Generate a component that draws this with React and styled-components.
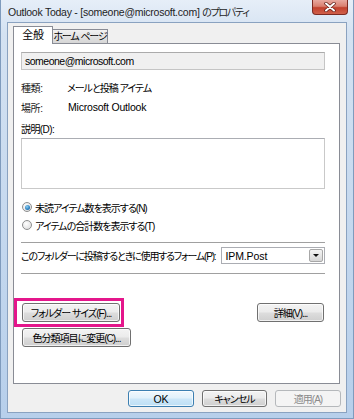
import React from "react";
import styled, { createGlobalStyle } from "styled-components";

const GlobalStyle = createGlobalStyle`
  html, body {
    margin: 0;
    padding: 0;
    background: #ffffff;
  }
  body {
    font-family: "Liberation Sans", "Noto Sans CJK JP", sans-serif;
    font-feature-settings: "palt";
    font-size: 10px;
    letter-spacing: -1px;
    color: #000;
  }
`;

// Latin runs are set a little larger and looser than the kana
const Lat = styled.span`
  font-size: 10.5px;
  letter-spacing: ${(p) => (p.$ls !== undefined ? p.$ls : -0.3)}px;
`;

const Window = styled.div`
  width: 354px;
  height: 419px;
  box-sizing: border-box;
  display: flex;
  flex-direction: column;
  padding: 0 6px 5px 6px;
  background: linear-gradient(180deg, #e6eef8 0%, #d4e2f2 8%, #c3d7ee 60%, #b7cfeb 100%);
  border: 1px solid #7f9bbd;
  border-top: none;
`;

const TitleBar = styled.div`
  height: 22px;
  display: flex;
  align-items: flex-start;
  justify-content: space-between;
  margin-left: -5px;
  margin-right: -1px;
`;

const Title = styled.div`
  line-height: 24px;
  padding-left: 6px;
  color: #1e1e1e;
  white-space: nowrap;
  letter-spacing: -1.3px;
`;

const CloseButton = styled.div`
  width: 36px;
  height: 15px;
  box-sizing: border-box;
  border: 1px solid #7c2a22;
  border-top: none;
  border-radius: 0 0 4px 4px;
  background: linear-gradient(180deg, #e8a99f 0%, #d98070 45%, #c2412e 55%, #d0604a 100%);
  display: flex;
  align-items: center;
  justify-content: center;
`;

const Client = styled.div`
  flex: 1;
  box-sizing: border-box;
  background: #f0f0f0;
  border: 1px solid #8aa2c0;
  padding: 4px 6px 0 5px;
  display: flex;
  flex-direction: column;
`;

const TabRow = styled.div`
  display: flex;
  align-items: flex-end;
  height: 17px;
  margin-bottom: -1px;
  position: relative;
  z-index: 1;
`;

const Tab = styled.div`
  box-sizing: border-box;
  height: ${(p) => (p.$active ? "18px" : "15px")};
  width: ${(p) => (p.$active ? "40px" : "55px")};
  text-align: center;
  border: 1px solid #898c95;
  border-bottom: ${(p) => (p.$active ? "none" : "1px solid #898c95")};
  border-left: ${(p) => (p.$active ? "1px solid #898c95" : "none")};
  background: ${(p) => (p.$active ? "#ffffff" : "linear-gradient(180deg, #f2f2f2 0%, #e3e3e3 50%, #d6d6d6 100%)")};
  line-height: ${(p) => (p.$active ? "17px" : "14px")};
  font-size: ${(p) => (p.$active ? "11px" : "10px")};
  letter-spacing: ${(p) => (p.$active ? "-0.2px" : "-1.1px")};
  white-space: nowrap;
`;

const Panel = styled.div`
  box-sizing: border-box;
  height: 341px;
  background: #ffffff;
  border: 1px solid #898c95;
  padding: 8px 14px 0 7px;
  display: flex;
  flex-direction: column;
`;

const ReadOnlyField = styled.div`
  height: 18px;
  box-sizing: border-box;
  background: #f0f0f0;
  border: 1px solid #c5c5c5;
  border-top-color: #ababab;
  padding-left: 3px;
  line-height: 16px;
  font-size: 10.5px;
  letter-spacing: -0.5px;
`;

const InfoRow = styled.div`
  height: 20px;
  display: flex;
  align-items: center;
  margin-top: ${(p) => p.$mt || 0}px;
  white-space: nowrap;
`;

const InfoLabel = styled.div`
  width: ${(p) => p.$w || 46}px;
  color: #1a1a1a;
  letter-spacing: -0.4px;
`;

const Label = styled.div`
  height: 14px;
  line-height: 14px;
  letter-spacing: -0.6px;
  margin-top: ${(p) => p.$mt || 0}px;
`;

const TextArea = styled.div`
  height: 51px;
  box-sizing: border-box;
  margin-top: 1px;
  border: 1px solid #c9c9c9;
  border-top-color: #abadb3;
  background: #fff;
`;

const RadioRow = styled.div`
  height: 16px;
  display: flex;
  align-items: center;
  margin-top: ${(p) => p.$mt || 0}px;
  padding-left: 1px;
  white-space: nowrap;
`;

const RadioCircle = styled.span`
  width: 10px;
  height: 10px;
  box-sizing: border-box;
  border-radius: 50%;
  border: 1px solid #8e8f8f;
  background: radial-gradient(circle at 40% 35%, #ffffff 0%, #e4e4e4 70%, #d0d0d0 100%);
  display: flex;
  align-items: center;
  justify-content: center;
  margin-right: 3px;
  flex-shrink: 0;

  &::after {
    content: "";
    display: ${(p) => (p.$checked ? "block" : "none")};
    width: 5px;
    height: 5px;
    border-radius: 50%;
    background: radial-gradient(circle at 40% 35%, #8fd0f2 0%, #2a7fbf 60%, #1a5a96 100%);
  }
`;

const Separator = styled.div`
  height: 1px;
  background: #a0a0a0;
  margin-top: ${(p) => p.$mt || 0}px;
`;

const FormRow = styled.div`
  height: 17px;
  margin-top: 4px;
  display: flex;
  align-items: center;
  gap: 6px;
  white-space: nowrap;
`;

const FormLabel = styled.span`
  flex-shrink: 0;
  letter-spacing: -1.2px;
`;

const Combo = styled.div`
  flex: 1;
  max-width: 110px;
  margin-left: auto;
  height: 17px;
  box-sizing: border-box;
  border: 1px solid #abadb3;
  background: #fff;
  display: flex;
  align-items: center;
  justify-content: space-between;
  padding-left: 3px;
  padding-right: 1px;
`;

const ComboArrow = styled.div`
  width: 14px;
  height: 13px;
  box-sizing: border-box;
  border: 1px solid #a7a7a7;
  border-radius: 2px;
  background: linear-gradient(180deg, #f4f4f4 0%, #e6e6e6 50%, #d6d6d6 100%);
  display: flex;
  align-items: center;
  justify-content: center;

  &::after {
    content: "";
    border-left: 3px solid transparent;
    border-right: 3px solid transparent;
    border-top: 3px solid #111;
  }
`;

const ButtonRow = styled.div`
  display: flex;
  align-items: flex-start;
  justify-content: space-between;
  margin-top: 24px;
  margin-left: -7px;
`;

const Highlight = styled.div`
  border: 3px solid #e4168b;
  padding: 2px 1px 2px 5px;
`;

const Button = styled.div`
  width: ${(p) => p.$w}px;
  height: ${(p) => p.$h || 19}px;
  box-sizing: border-box;
  border: 1px solid ${(p) => (p.$default ? "#3c7fb1" : p.$disabled ? "#b5b8bb" : "#707070")};
  border-radius: 3px;
  background: ${(p) =>
    p.$default
      ? "linear-gradient(180deg, #f1f8fd 0%, #e1f1fb 48%, #cde7f8 52%, #bcdff5 100%)"
      : p.$disabled
      ? "#f4f4f4"
      : "linear-gradient(180deg, #f3f3f3 0%, #ebebeb 48%, #dddddd 52%, #cfcfcf 100%)"};
  box-shadow: inset 0 0 0 1px ${(p) => (p.$disabled ? "transparent" : "rgba(255,255,255,0.7)")};
  color: ${(p) => (p.$disabled ? "#8a8a8a" : "#000")};
  display: flex;
  align-items: center;
  justify-content: center;
  white-space: nowrap;
  margin-top: ${(p) => p.$mt || 0}px;
  margin-left: ${(p) => p.$ml || 0}px;
  margin-right: ${(p) => p.$mr || 0}px;
`;

const Footer = styled.div`
  display: flex;
  justify-content: flex-end;
  gap: 8px;
  margin-top: 6px;
  margin-right: -1px;
`;

const CloseIcon = () => (
  <svg width="12" height="10" viewBox="0 0 12 10">
    <path d="M2 1.5 L10 8.5 M10 1.5 L2 8.5" stroke="#5a1a14" strokeWidth="3.4" strokeLinecap="round" />
    <path d="M2 1.5 L10 8.5 M10 1.5 L2 8.5" stroke="#ffffff" strokeWidth="2" strokeLinecap="round" />
  </svg>
);

export default function App() {
  return (
    <>
      <GlobalStyle />
      <Window>
        <TitleBar>
          <Title>
            <Lat $ls={-0.25}>Outlook Today - [someone@microsoft.com] </Lat>のプロパティ
          </Title>
          <CloseButton>
            <CloseIcon />
          </CloseButton>
        </TitleBar>
        <Client>
          <TabRow>
            <Tab $active>全般</Tab>
            <Tab>ホーム ページ</Tab>
          </TabRow>
          <Panel>
            <ReadOnlyField>someone@microsoft.com</ReadOnlyField>
            <InfoRow $mt={7}>
              <InfoLabel>種類:</InfoLabel>
              <span>メールと投稿 アイテム</span>
            </InfoRow>
            <InfoRow>
              <InfoLabel $w={47}>場所:</InfoLabel>
              <Lat $ls={-0.2}>Microsoft Outlook</Lat>
            </InfoRow>
            <Label $mt={6}>説明(D):</Label>
            <TextArea />
            <RadioRow $mt={10}>
              <RadioCircle $checked />
              未読アイテム数を表示する(N)
            </RadioRow>
            <RadioRow $mt={2}>
              <RadioCircle />
              アイテムの合計数を表示する(T)
            </RadioRow>
            <Separator $mt={9} />
            <FormRow>
              <FormLabel>このフォルダーに投稿するときに使用するフォーム(P):</FormLabel>
              <Combo>
                <Lat $ls={-0.1}>IPM.Post</Lat>
                <ComboArrow />
              </Combo>
            </FormRow>
            <Separator $mt={9} />
            <ButtonRow>
              <Highlight>
                <Button $w={98}>フォルダー サイズ(F)...</Button>
              </Highlight>
              <Button $w={67} $mt={5} $mr={1}>詳細(V)...</Button>
            </ButtonRow>
            <Button $w={109} $mt={1} $ml={1}>色分類項目に変更(C)...</Button>
          </Panel>
          <Footer>
            <Button $w={66} $h={17} $default>
              <Lat $ls={0}>OK</Lat>
            </Button>
            <Button $w={65} $h={17}>キャンセル</Button>
            <Button $w={66} $h={17} $disabled>適用(A)</Button>
          </Footer>
        </Client>
      </Window>
    </>
  );
}
